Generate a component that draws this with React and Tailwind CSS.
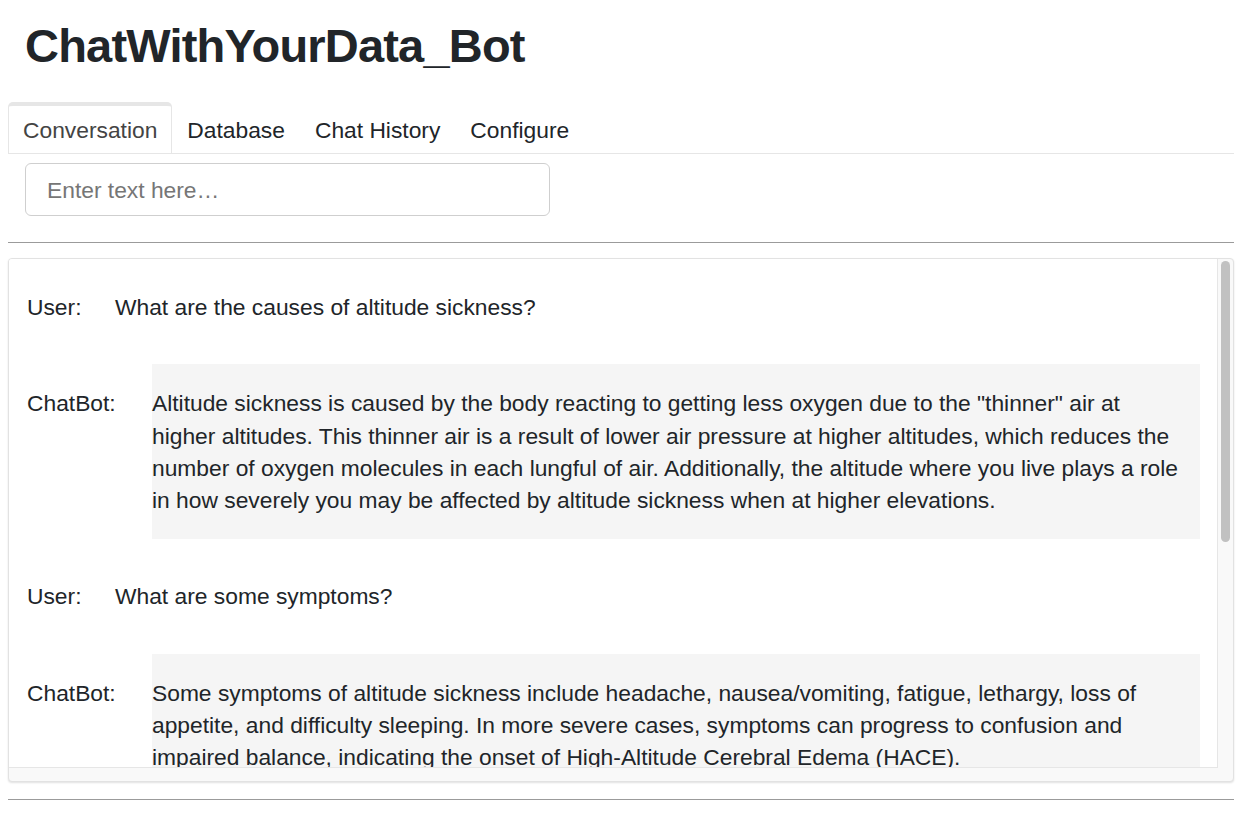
export default function App() {
  const bot1 = [
    'Altitude sickness is caused by the body reacting to getting less oxygen due to the "thinner" air at',
    'higher altitudes. This thinner air is a result of lower air pressure at higher altitudes, which reduces the',
    'number of oxygen molecules in each lungful of air. Additionally, the altitude where you live plays a role',
    'in how severely you may be affected by altitude sickness when at higher elevations.',
  ];
  const bot2 = [
    'Some symptoms of altitude sickness include headache, nausea/vomiting, fatigue, lethargy, loss of',
    'appetite, and difficulty sleeping. In more severe cases, symptoms can progress to confusion and',
    'impaired balance, indicating the onset of High-Altitude Cerebral Edema (HACE).',
  ];

  const UserRow = ({ text }) => (
    <div className="flex py-[23px] leading-[32.3px]">
      <div className="w-[88px] shrink-0">User:</div>
      <div className="whitespace-nowrap">{text}</div>
    </div>
  );

  const BotRow = ({ lines }) => (
    <div className="flex">
      <div className="w-[125px] shrink-0 py-[23px] leading-[32.3px]">ChatBot:</div>
      <div className="flex-1 bg-[#f5f5f5] py-[23px] leading-[32.3px]">
        {lines.map((l, i) => (
          <div key={i} className="whitespace-nowrap">
            {l}
          </div>
        ))}
      </div>
    </div>
  );

  return (
    <div className="w-[1258px] h-[817px] overflow-hidden bg-white text-[#212529] font-['Liberation_Sans',Arial,sans-serif]">
      <div className="w-[1234px]">
        <h1 className="pl-[25px] pt-[20px] text-[47px] leading-[52px] font-bold tracking-[-0.8px]">
          ChatWithYourData_Bot
        </h1>

        <div className="ml-[8px] mt-[30px] flex items-end border-b border-[#e6e6e6] text-[22.8px]">
          <div className="h-[51px] px-[14px] pt-[1px] flex items-center border-t-4 border-x border-[#e6e6e6] rounded-t-[5px] text-[#444]">
            Conversation
          </div>
          <div className="h-[51px] px-[15px] pt-[5px] flex items-center">Database</div>
          <div className="h-[51px] px-[15px] pt-[5px] flex items-center">Chat History</div>
          <div className="h-[51px] px-[15px] pt-[5px] flex items-center">Configure</div>
        </div>

        <div className="pl-[25px] pt-[9px]">
          <input
            className="w-[525px] h-[53px] border border-[#cfcfcf] rounded-[6px] pl-[21px] pt-[2px] text-[22.8px] outline-none placeholder:text-[#767676]"
            placeholder="Enter text here…"
          />
        </div>

        <div className="ml-[8px] mt-[26px] border-t border-[#9b9b9b]" />

        <div className="ml-[8px] mt-[15px] h-[524px] border border-[#e2e2e2] rounded-[4px] bg-[#f9f9f9] shadow-[0_1px_2px_rgba(0,0,0,0.12)] flex flex-col overflow-hidden text-[22.8px]">
          <div className="flex h-[509px]">
            <div className="flex-1 bg-white border-r border-b border-[#e6e6e6] overflow-hidden pl-[18px] pr-[17px] pt-[9px]">
              <div className="flex flex-col gap-[18px]">
                <UserRow text="What are the causes of altitude sickness?" />
                <BotRow lines={bot1} />
                <UserRow text="What are some symptoms?" />
                <BotRow lines={bot2} />
              </div>
            </div>
            <div className="w-[15px] shrink-0 pl-[3px] pt-[2px]">
              <div className="w-[9px] h-[281px] rounded-full bg-[#c1c1c1]" />
            </div>
          </div>
        </div>

        <div className="ml-[8px] mt-[17px] border-t border-[#9b9b9b]" />
      </div>
    </div>
  );
}
